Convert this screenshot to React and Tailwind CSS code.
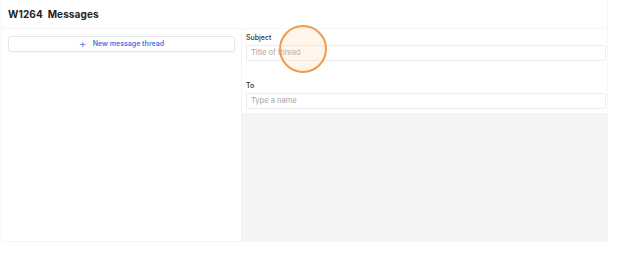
import React from "react";

export default function App() {
  return (
    <div className="relative w-[618px] h-[255px] bg-white font-['Inter',sans-serif] overflow-hidden">
      <div className="ml-[1px] w-[607px] h-[242px] border border-[#f5f5f7] border-t-0 rounded-tr-[4px] flex flex-col">
        {/* Header */}
        <div className="h-[29px] px-[6px] flex items-center border-b border-[#f5f5f7]">
          <h1 className="text-[10px] font-bold text-[#222] tracking-[0.1px]">W1264&nbsp; Messages</h1>
        </div>

        <div className="flex flex-1">
          {/* Left column */}
          <div className="w-[239px] px-[6px] pt-[7px]">
            <button className="w-full h-[16px] flex items-center justify-center gap-[6px] border border-[#e3e5ea] rounded-[3px] shadow-[0_1px_1px_rgba(0,0,0,0.04)] text-[7px] font-semibold text-[#4a78e0]">
              <span className="text-[12px] font-light leading-none -mt-[1px]">+</span>
              New message thread
            </button>
          </div>

          {/* Right column */}
          <div className="flex-1 flex flex-col border-l border-[#f3f3f5]">
            <div className="pl-[4px] pr-[1px] pt-[4px] pb-[4px]">
              <div className="text-[7px] font-medium text-[#333] leading-[9px]">Subject</div>
              <div className="mt-[3px] h-[16px] border border-[#ededf0] rounded-[2px] px-[4px] flex items-center text-[7.5px] text-[#a3a3a8]">
                Title of thread
              </div>
              <div className="mt-[20px] text-[7px] font-medium text-[#333] leading-[9px]">To</div>
              <div className="mt-[3px] h-[16px] border border-[#ededf0] rounded-[2px] px-[4px] flex items-center text-[7.5px] text-[#a3a3a8]">
                Type a name
              </div>
            </div>
            <div className="flex-1 bg-[#f4f4f6]" />
          </div>
        </div>
      </div>

      {/* cursor highlight */}
      <div className="absolute left-[279px] top-[25px] w-[48px] h-[48px] rounded-full border-2 border-[#f19a4c] bg-[rgba(255,214,170,0.25)]" />
    </div>
  );
}
